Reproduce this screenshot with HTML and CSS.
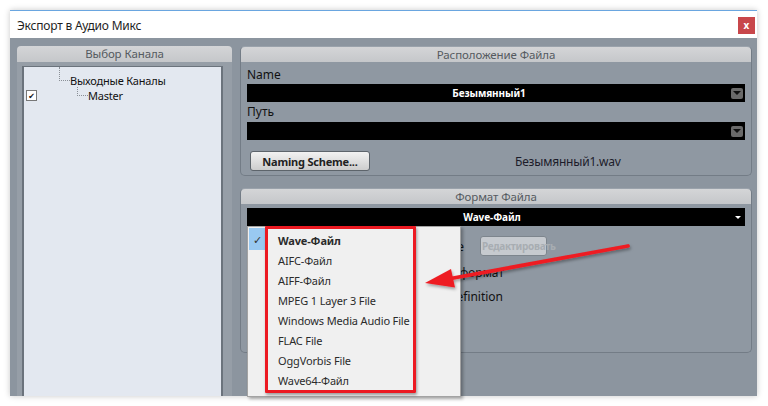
FILE: index.html
```html
<!DOCTYPE html>
<html lang="ru">
<head>
<meta charset="utf-8">
<title>Экспорт в Аудио Микс</title>
<link rel="stylesheet" href="styles.css">
</head>
<body>
<div class="window">
  <div class="titlebar">
    <span class="title">Экспорт в Аудио Микс</span>
    <span class="close">x</span>
  </div>
  <div class="wbody">
    <div class="leftcol">
      <div class="hdr">Выбор Канала</div>
      <div class="leftframe">
        <div class="list">
          <div class="trow trow1">
            <span class="conn conn1"></span>
            <span class="tlabel">Выходные Каналы</span>
          </div>
          <div class="trow trow2">
            <span class="cbox">✔</span>
            <span class="conn conn2"></span>
            <span class="tlabel tlabel2">Master</span>
          </div>
        </div>
      </div>
    </div>
    <div class="rightcol">
      <section class="sec sec-loc">
        <div class="hdr">Расположение Файла</div>
        <div class="secbody">
          <div class="lbl lbl-first">Name</div>
          <div class="field"><span class="ftext">Безымянный1</span><span class="drop"></span></div>
          <div class="lbl">Путь</div>
          <div class="field"><span class="ftext"></span><span class="drop"></span></div>
          <div class="btnrow">
            <button class="btn">Naming Scheme...</button>
            <span class="fname">Безымянный1.wav</span>
          </div>
        </div>
      </section>
      <section class="sec sec-fmt">
        <div class="hdr">Формат Файла</div>
        <div class="secbody">
          <div class="field field-fmt"><span class="ftext">Wave-Файл</span><span class="tri"></span></div>
          <div class="opt opt1"><span class="olabel ol1">Wave</span><button class="btn-dis">Редактировать</button></div>
          <div class="opt opt2"><span class="olabel ol2">формат</span></div>
          <div class="opt opt3"><span class="olabel ol3">Definition</span></div>
        </div>
      </section>
    </div>
  </div>
</div>

<div class="menu">
  <div class="mitem checked"><span class="mcheck">✓</span><span class="mtext bold">Wave-Файл</span></div>
  <div class="mitem"><span class="mcheck"></span><span class="mtext">AIFC-Файл</span></div>
  <div class="mitem"><span class="mcheck"></span><span class="mtext">AIFF-Файл</span></div>
  <div class="mitem"><span class="mcheck"></span><span class="mtext">MPEG 1 Layer 3 File</span></div>
  <div class="mitem"><span class="mcheck"></span><span class="mtext">Windows Media Audio File</span></div>
  <div class="mitem"><span class="mcheck"></span><span class="mtext">FLAC File</span></div>
  <div class="mitem"><span class="mcheck"></span><span class="mtext">OggVorbis File</span></div>
  <div class="mitem"><span class="mcheck"></span><span class="mtext">Wave64-Файл</span></div>
</div>
<div class="annot-box"></div>
<svg class="arrow" width="768" height="406" viewBox="0 0 768 406">
  <defs>
    <filter id="sh" x="-20%" y="-50%" width="140%" height="200%">
      <feDropShadow dx="1" dy="2" stdDeviation="1.5" flood-color="#000" flood-opacity="0.35"/>
    </filter>
  </defs>
  <g filter="url(#sh)">
    <line x1="628" y1="246" x2="448" y2="279" stroke="#ee1c24" stroke-width="3.8" stroke-linecap="round"/>
    <polygon points="425,283 451,269 455,287.5" fill="#ee1c24"/>
  </g>
</svg>
</body>
</html>
```

FILE: styles.css
```css
* { box-sizing: border-box; margin: 0; padding: 0; }
html, body { background: #ffffff; }
body {
  width: 768px;
  height: 406px;
  overflow: hidden;
  position: relative;
  padding: 10px 11px 10px 10px;
  font-family: "Noto Sans", "DejaVu Sans", sans-serif;
}
.window {
  width: 747px;
  height: 386px;
  display: flex;
  flex-direction: column;
  background: #ffffff;
  border-top: 1px solid #6aa6e0;
  box-shadow: 0 0 6px rgba(0, 0, 0, 0.22);
}
.titlebar {
  height: 27px;
  display: flex;
  justify-content: space-between;
  align-items: flex-start;
  padding: 0 2px 0 7px;
}
.title {
  font-size: 12px;
  line-height: 15px;
  margin-top: 7px;
  color: #1e1e1e;
  letter-spacing: -0.2px;
}
.close {
  margin-top: 6px;
  width: 17px;
  height: 17px;
  background: #c8474b;
  color: #fff;
  font-size: 10px;
  font-weight: bold;
  line-height: 16px;
  text-align: center;
}
.wbody {
  flex: 1;
  background: #8c959f;
  display: flex;
  gap: 8px;
  padding: 8px 5px 0 7px;
}
.leftcol {
  width: 215px;
  display: flex;
  flex-direction: column;
}
.hdr {
  height: 15px;
  line-height: 15px;
  font-size: 11.5px;
  color: #555a60;
  text-align: center;
  background: linear-gradient(#d4d5d7, #c5c7ca);
  border-radius: 4px 4px 0 0;
  letter-spacing: -0.1px;
}
.leftcol .hdr { height: 16px; line-height: 16px; }
.leftframe {
  flex: 1;
  background: #969ea7;
  padding: 4px 9px 0 5px;
  display: flex;
}
.list {
  flex: 1;
  background: #e3e8f0;
  border: 2px solid #6b737c;
  border-bottom: 0;
  border-top-width: 1px;
  font-size: 11px;
  color: #111;
}
.trow { display: flex; align-items: flex-start; }
.trow1 { height: 20px; padding-left: 35px; }
.conn {
  border-left: 1px dotted #8a8f96;
  border-bottom: 1px dotted #8a8f96;
  width: 11px;
}
.conn1 { height: 14px; }
.tlabel { line-height: 14px; margin-top: 7px; letter-spacing: -0.2px; }
.trow2 { height: 20px; padding-left: 2px; }
.cbox {
  width: 11px;
  height: 11px;
  margin-top: 3px;
  background: #fff;
  border: 1px solid #777;
  font-size: 8px;
  line-height: 9px;
  text-align: center;
  color: #111;
}
.conn2 { height: 9px; margin-left: 40px; }
.tlabel2 { margin-top: 2px; }
.rightcol {
  flex: 1;
  display: flex;
  flex-direction: column;
  gap: 12px;
}
.sec {
  border: 1px solid #737c86;
  border-top-color: #9aa2ab;
  border-radius: 5px;
  background: #8f98a2;
}
.sec-loc { height: 130px; }
.sec-fmt { height: 165px; }
.secbody { padding: 0 6px; }
.lbl {
  font-size: 12px;
  line-height: 16px;
  color: #111;
  margin-top: 2px;
  margin-bottom: 2px;
}
.lbl-first { margin-top: 5px; margin-bottom: 1px; }
.field {
  height: 18px;
  background: #000;
  display: flex;
  align-items: center;
}
.ftext {
  flex: 1;
  text-align: center;
  color: #fff;
  font-size: 10px;
  font-weight: bold;
  letter-spacing: -0.1px;
}
.drop {
  width: 12px;
  height: 11px;
  margin-right: 2px;
  background: #6a6a6a;
  border-radius: 2px;
  display: flex;
  justify-content: center;
  align-items: center;
}
.drop::after {
  content: "";
  border-left: 4px solid transparent;
  border-right: 4px solid transparent;
  border-top: 4px solid #111;
}
.btnrow {
  display: flex;
  align-items: center;
  margin-top: 11px;
  height: 20px;
}
.btn {
  width: 120px;
  height: 20px;
  margin-left: 3px;
  background: linear-gradient(#f2f2f2, #cdcdcd);
  border: 1px solid #5d646b;
  border-radius: 3px;
  font-family: inherit;
  font-size: 11px;
  font-weight: bold;
  color: #222;
  letter-spacing: -0.2px;
}
.fname {
  margin-left: 145px;
  font-size: 12px;
  color: #1c1c2a;
  letter-spacing: -0.2px;
}
.field-fmt { margin-top: 4px; }
.field-fmt .ftext { padding-left: 4px; }
.tri {
  margin-right: 2px;
  width: 10px;
  display: flex;
  justify-content: center;
}
.tri::after {
  content: "";
  border-left: 3px solid transparent;
  border-right: 3px solid transparent;
  border-top: 3px solid #fff;
}
.opt {
  display: flex;
  align-items: center;
  height: 24px;
}
.opt1 { margin-top: 8px; }
.opt2 { margin-top: 2px; }
.olabel {
  font-size: 12px;
  color: #111;
  text-align: right;
  white-space: nowrap;
}
.ol1 { width: 217px; }
.ol2 { width: 257px; }
.ol3 { width: 256px; }
.btn-dis {
  margin-left: 16px;
  width: 67px;
  height: 20px;
  background: #c6cacf;
  border: 1px solid #7d858d;
  border-radius: 3px;
  font-family: inherit;
  font-size: 10px;
  font-weight: bold;
  color: #a8adb2;
  text-align: left;
  padding-left: 1px;
  letter-spacing: -0.3px;
  white-space: nowrap;
  overflow: visible;
}

/* overlay: dropdown menu */
.menu {
  position: absolute;
  left: 247px;
  top: 226px;
  width: 214px;
  height: 171px;
  background: #f0f0f0;
  border: 1px solid #a3a3a3;
  box-shadow: 2px 2px 3px rgba(0, 0, 0, 0.3);
  padding-top: 1px;
}
.mitem {
  display: flex;
  height: 20px;
  align-items: center;
}
.mitem.checked { height: 22px; }
.mcheck {
  width: 17px;
  height: 100%;
  margin-left: 1px;
  font-size: 11px;
  color: #333;
  display: flex;
  align-items: center;
  justify-content: center;
}
.checked .mcheck { background: #99c9f1; }
.mtext {
  margin-left: 12px;
  font-size: 11px;
  color: #2b2b2b;
  white-space: nowrap;
  letter-spacing: -0.15px;
}
.mtext.bold { font-weight: bold; }
.checked .mtext { margin-top: 2px; }

/* overlay: annotation */
.annot-box {
  position: absolute;
  left: 265px;
  top: 226px;
  width: 151px;
  height: 167px;
  border: 3px solid #ec1a22;
  border-radius: 1px;
  box-shadow: 1px 2px 3px rgba(0, 0, 0, 0.35);
}
.arrow {
  position: absolute;
  left: 0;
  top: 0;
  pointer-events: none;
}
```
